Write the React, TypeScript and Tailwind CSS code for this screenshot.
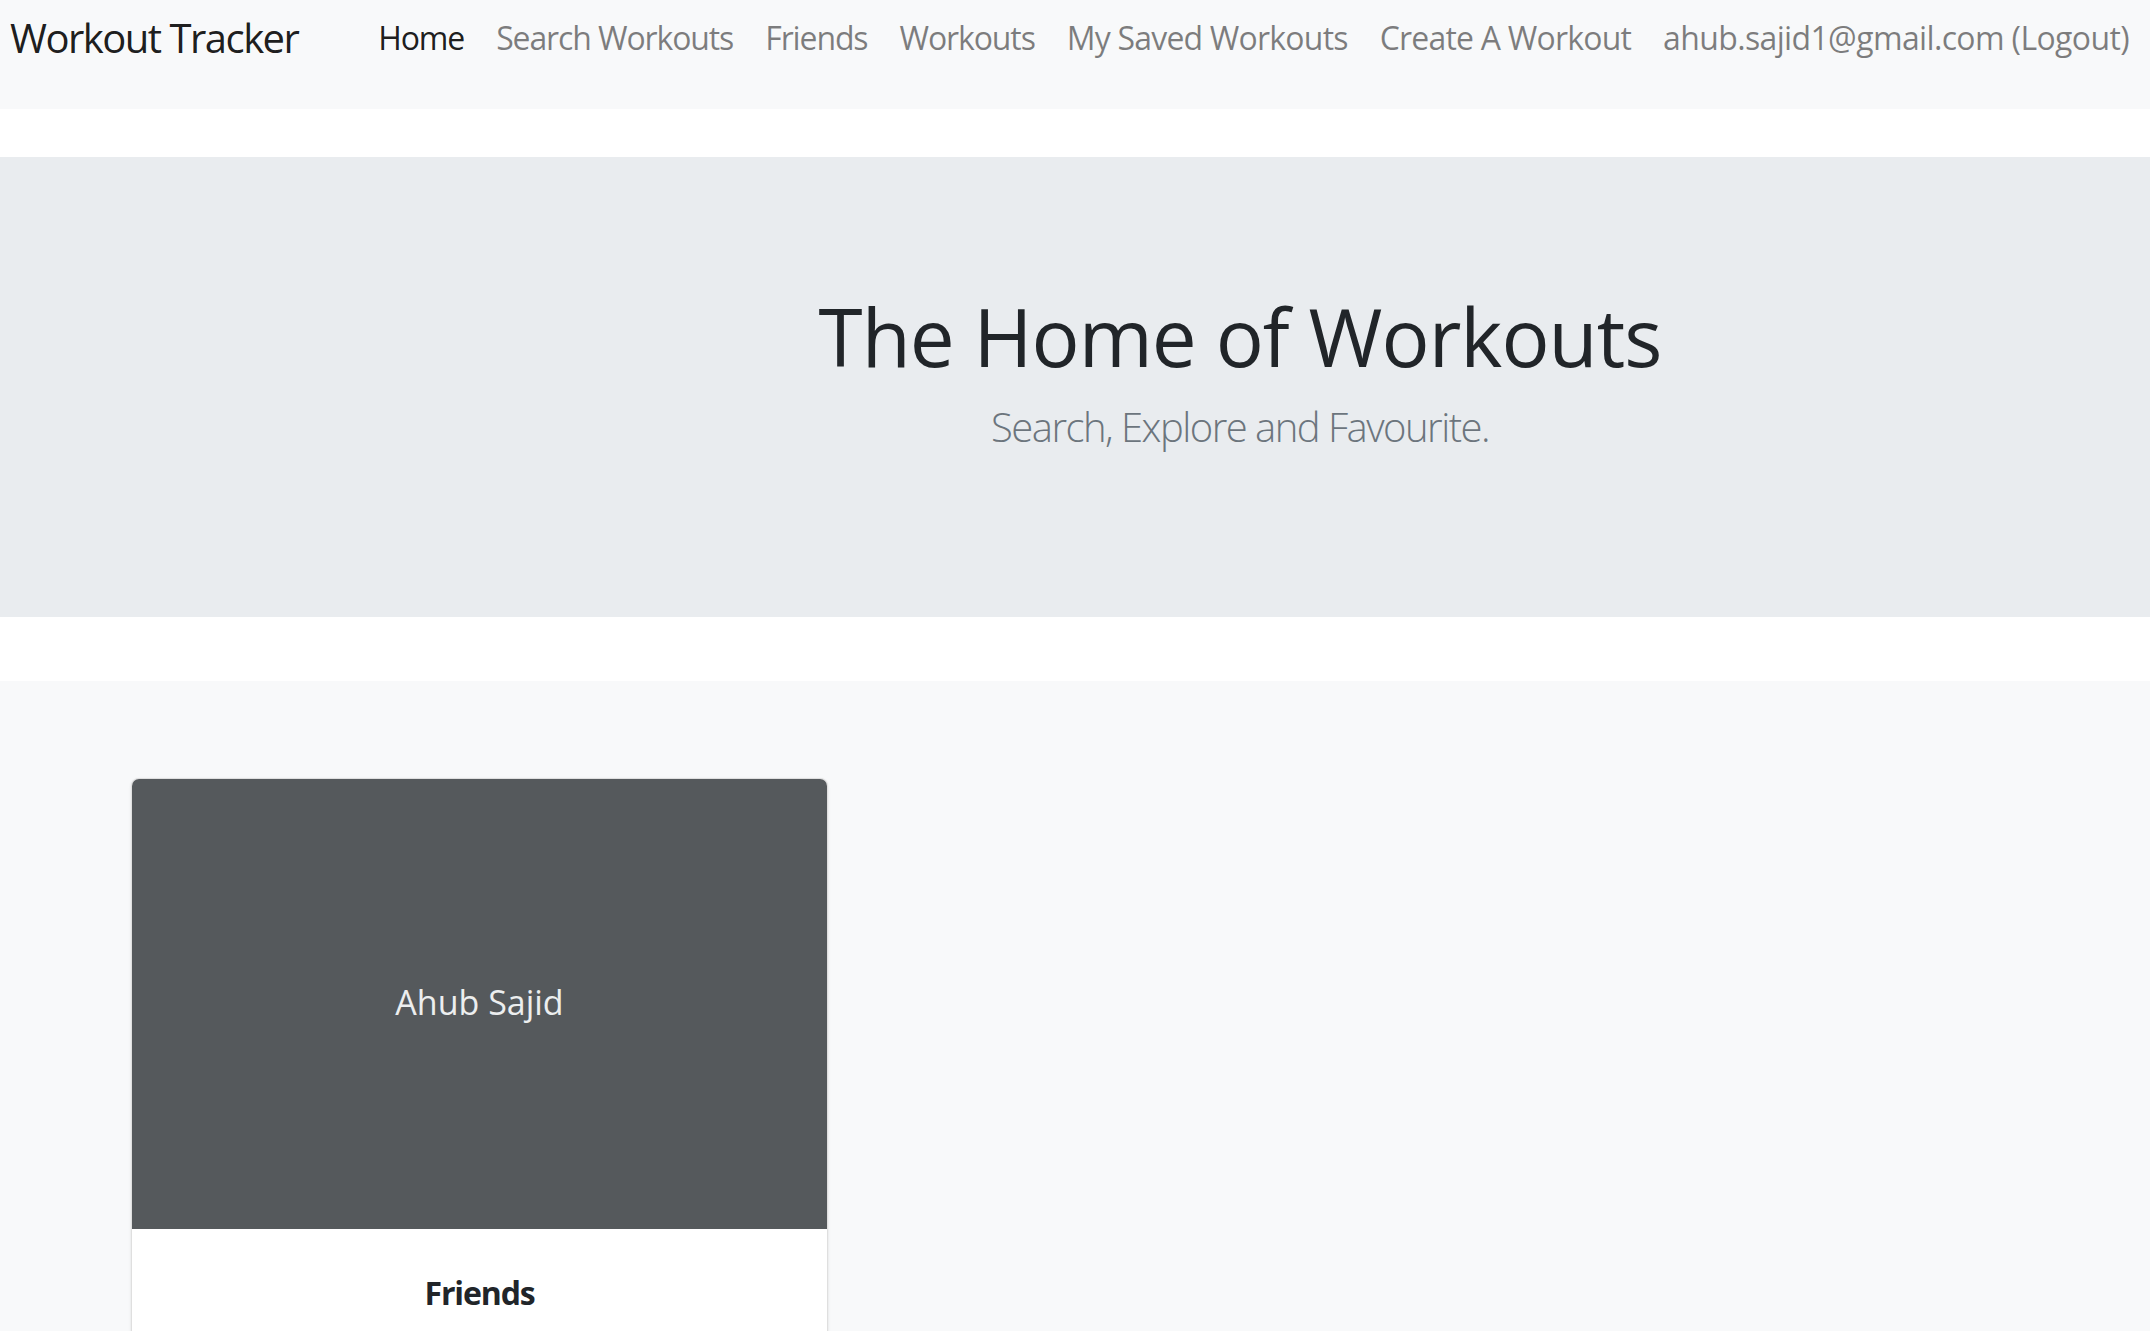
import React from "react";

const font = { fontFamily: '"Open Sans", "Noto Sans", sans-serif' };

export default function App() {
  return (
    <div className="min-h-[1331px] bg-white" style={font}>
      <nav className="h-[109px] bg-[#f8f9fa] flex items-start pl-[10px] pr-[5px] pt-[8px]">
        <a className="text-[40px] leading-[60px] tracking-[-0.038em] text-[rgba(0,0,0,0.9)] whitespace-nowrap">Workout Tracker</a>
        <ul className="ml-auto flex items-start mt-[6px] text-[32px] leading-[48px] whitespace-nowrap">
          <li className="px-4 tracking-[-0.035em] text-[rgba(0,0,0,0.9)]">Home</li>
          <li className="px-4 tracking-[-0.035em] text-[rgba(0,0,0,0.5)]">Search Workouts</li>
          <li className="px-4 tracking-[-0.035em] text-[rgba(0,0,0,0.5)]">Friends</li>
          <li className="px-4 tracking-[-0.035em] text-[rgba(0,0,0,0.5)]">Workouts</li>
          <li className="px-4 tracking-[-0.025em] text-[rgba(0,0,0,0.5)]">My Saved Workouts</li>
          <li className="px-4 tracking-[-0.025em] text-[rgba(0,0,0,0.5)]">Create A Workout</li>
          <li className="px-4 tracking-[-0.02em] text-[rgba(0,0,0,0.5)]">ahub.sajid1@gmail.com (Logout)</li>
        </ul>
      </nav>
      <div className="h-[48px]" />
      <section className="h-[460px] bg-[#e9ecef] pl-[330px] pt-[131px] text-center">
        <h1 className="text-[80px] leading-[96px] font-medium tracking-[-0.012em] text-[#212529] mb-[13px]">The Home of Workouts</h1>
        <p className="text-[40px] leading-[60px] font-light tracking-[-0.038em] text-[#6c757d]">Search, Explore and Favourite.</p>
      </section>
      <div className="h-[64px]" />
      <main className="bg-[#f8f9fa] pt-[97px] pl-[131px] pb-[200px]">
        <div className="w-[697px] bg-white border border-[rgba(0,0,0,0.125)] rounded-[8px] overflow-hidden shadow-sm">
          <div className="h-[450px] bg-[#55595c] flex items-center justify-center pb-[3px]">
            <span className="text-[34px] text-[#eceeef]">Ahub Sajid</span>
          </div>
          <div className="pt-[40px] pb-[40px] text-center">
            <h5 className="text-[32px] leading-[48px] font-bold tracking-[-0.035em] text-[#212529]">Friends</h5>
          </div>
        </div>
      </main>
    </div>
  );
}
